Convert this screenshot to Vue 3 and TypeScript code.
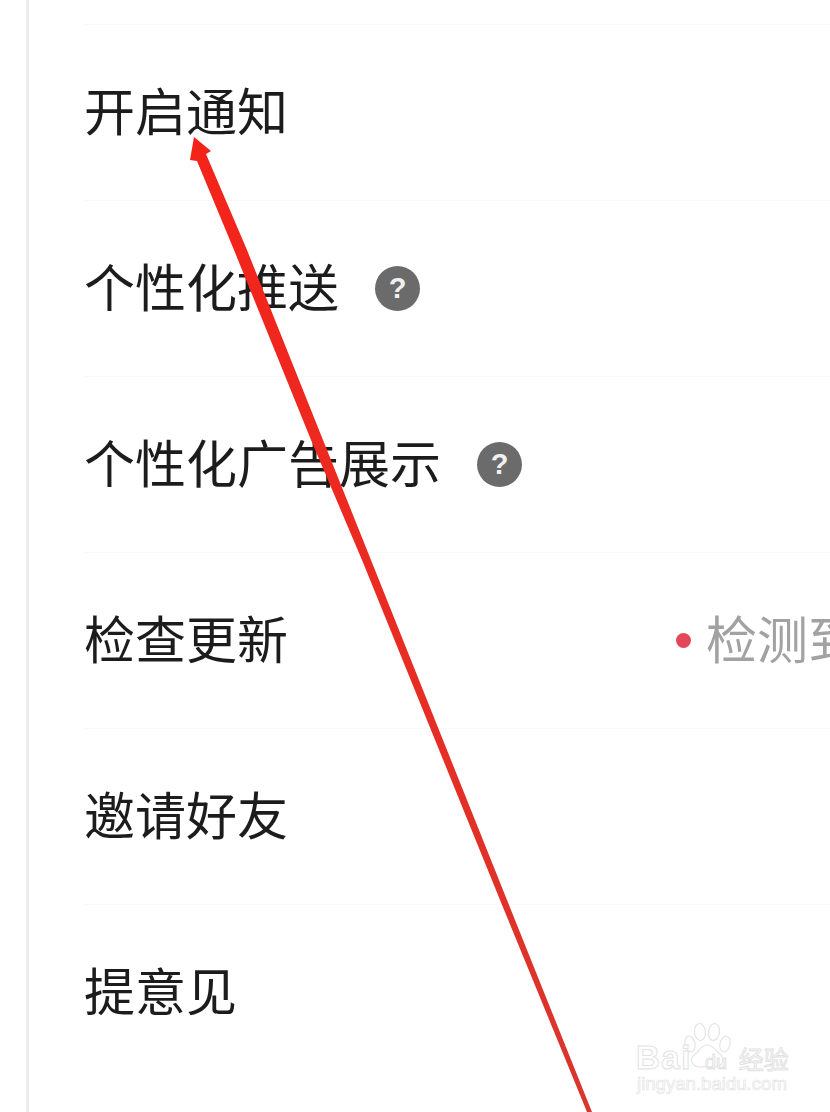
<script setup lang="ts">
interface Row { label: string; help?: boolean; status?: string }
const rows: Row[] = [
  { label: '开启通知' },
  { label: '个性化推送', help: true },
  { label: '个性化广告展示', help: true },
  { label: '检查更新', status: '检测到新版本' },
  { label: '邀请好友' },
  { label: '提意见' },
]
</script>

<template>
  <div class="page">
    <div class="list">
      <div v-for="r in rows" :key="r.label" class="row">
        <span class="label">{{ r.label }}</span>
        <span v-if="r.help" class="help">?</span>
        <span v-if="r.status" class="status"><i class="dot"></i><span class="status-text">{{ r.status }}</span></span>
      </div>
    </div>

    <svg class="arrow" viewBox="0 0 830 1112" width="830" height="1112">
      <defs>
        <linearGradient id="arrow-fill" x1="0" y1="0" x2="0" y2="1">
          <stop offset="0" stop-color="#f4231a" />
          <stop offset="0.45" stop-color="#ea2b22" />
          <stop offset="1" stop-color="#d8362e" />
        </linearGradient>
      </defs>
      <polygon
        points="194,137 211,151 206,154 247,250 323,440 371,560 507,900 592,1112 587,1112 500,900 362,560 311,440 234,250 197,161 190,160"
        fill="url(#arrow-fill)"
      />
    </svg>

    <div class="mark">
      <svg class="paw" viewBox="0 0 50 46" width="50" height="46">
        <g fill="#fff" stroke="#e4e4e4" stroke-width="1.2">
          <ellipse cx="7" cy="22" rx="5" ry="8" transform="rotate(-12 7 22)" />
          <ellipse cx="17" cy="10" rx="5.5" ry="8.5" transform="rotate(-6 17 10)" />
          <ellipse cx="31" cy="10" rx="5.5" ry="8.5" transform="rotate(8 31 10)" />
          <ellipse cx="42" cy="22" rx="5" ry="8" transform="rotate(14 42 22)" />
          <path d="M24 23c6 0 9 6 13 9 5 4 3 13-5 13-5 0-10-1-15 0-8 0-11-8-6-12 5-3 7-10 13-10z" />
        </g>
      </svg>
      <div class="mark-top"><span class="bai">Bai</span><span class="du">du</span><span class="jy">经验</span></div>
      <div class="mark-url">jingyan.baidu.com</div>
    </div>
  </div>
</template>

<style>
html, body { margin: 0; background: #fff; }
</style>

<style scoped>
.page {
  position: relative;
  width: 830px;
  height: 1112px;
  overflow: hidden;
  background: #fff;
  font-family: "Noto Sans CJK SC", "Noto Sans", sans-serif;
  box-sizing: border-box;
  padding-left: 26px;
}
.list {
  height: 100%;
  border-left: 3px solid #ececec;
  padding-top: 24px;
  box-sizing: border-box;
}
.row {
  display: flex;
  align-items: center;
  box-sizing: border-box;
  height: 176px;
  margin-left: 55px;
  border-top: 1px solid #f9f9f9;
  white-space: nowrap;
  position: relative;
}
.label {
  font-size: 51px;
  line-height: 60px;
  color: #1c1c1c;
  margin-bottom: 8px;
}
.help {
  margin-left: 36px;
  width: 45px;
  height: 45px;
  border-radius: 50%;
  background: #6b6b6b;
  color: #f0f0f0;
  font-size: 29px;
  font-weight: 700;
  line-height: 45px;
  text-align: center;
  font-family: "Liberation Sans", sans-serif;
}
.status {
  position: absolute;
  left: 592px;
  top: 50%;
  transform: translateY(-50%);
  display: flex;
  align-items: center;
  font-size: 51px;
  line-height: 60px;
  color: #a2a2a2;
}
.status-text { margin-bottom: 8px; }
.dot {
  width: 15px;
  height: 15px;
  border-radius: 50%;
  background: #e2485a;
  margin-right: 15px;
}
.arrow {
  position: absolute;
  left: 0;
  top: 0;
  pointer-events: none;
}
.mark {
  position: absolute;
  left: 636px;
  top: 1022px;
  width: 160px;
  height: 76px;
  color: #fff;
}
.paw {
  position: absolute;
  left: 47px;
  top: 0;
}
.mark-top {
  position: absolute;
  left: 0;
  top: 16px;
  display: flex;
  align-items: baseline;
  font-family: "Liberation Sans", sans-serif;
  -webkit-text-stroke: 1px #e2e2e2;
  color: #fff;
}
.bai { font-size: 33px; font-weight: 700; line-height: 40px; letter-spacing: 1.5px; }
.du { font-size: 20px; margin-left: 13px; width: 34px; position: relative; z-index: 1; }
.jy { font-size: 25px; font-family: "Noto Sans CJK SC", sans-serif; }
.mark-url {
  position: absolute;
  left: 1px;
  top: 52px;
  font-family: "Liberation Sans", sans-serif;
  font-size: 18.6px;
  line-height: 20px;
  color: #fff;
  -webkit-text-stroke: 0.7px #e4e4e4;
  white-space: nowrap;
}
</style>
